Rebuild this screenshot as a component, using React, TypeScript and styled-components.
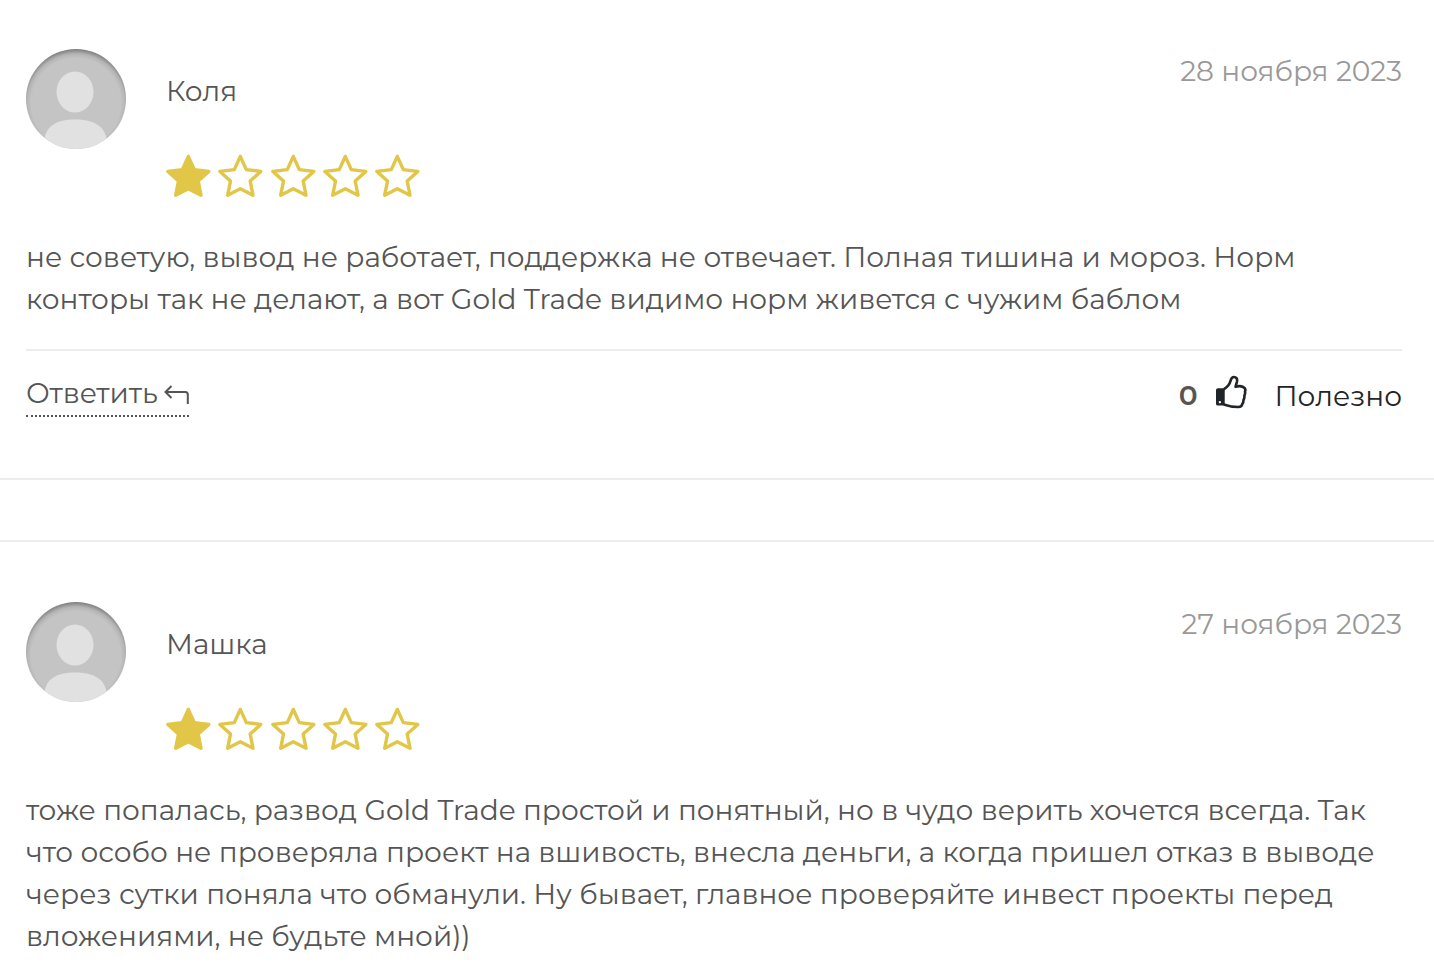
import React from "react";
import styled, { createGlobalStyle } from "styled-components";

const GlobalStyle = createGlobalStyle`
  *, *::before, *::after { box-sizing: border-box; }
  body {
    margin: 0;
    background: #fff;
    color: #555;
    font-family: Montserrat, Inter, sans-serif;
    font-size: 28px;
    font-weight: 400;
    line-height: 42px;
  }
`;

const Feed = styled.main`
  display: flex;
  flex-direction: column;
  gap: 60px;
`;

const Review = styled.article<{ $first?: boolean }>`
  padding: ${(p) => (p.$first ? "49px 32px 61px 26px" : "60px 32px 0 26px")};
  border-top: ${(p) => (p.$first ? "0" : "2px solid #ededed")};
  border-bottom: ${(p) => (p.$first ? "2px solid #ededed" : "0")};
`;

const Header = styled.header`
  display: flex;
  align-items: flex-start;
  gap: 40px;
`;

const AvatarImage = styled.svg`
  display: block;
  flex: none;
  width: 100px;
  height: 100px;
`;

const Author = styled.div`
  flex: 1;
  padding-top: 21px;
`;

const Name = styled.h2`
  margin: 0 0 42px;
  font-size: 28px;
  font-weight: 400;
  line-height: 42px;
`;

const PostDate = styled.time`
  padding-top: 1px;
  color: #999;
`;

const Stars = styled.div`
  display: flex;
  justify-content: space-between;
  width: 254px;
  height: 43px;
`;

const StarIcon = styled.svg`
  display: block;
  width: 45px;
  height: 43px;
`;

const Body = styled.p`
  margin: 39px 0 0;
`;

const Footer = styled.footer`
  display: flex;
  justify-content: space-between;
  align-items: flex-start;
  margin-top: 29px;
  padding-top: 21px;
  border-top: 2px solid #ededed;
`;

const PlainButton = styled.button`
  display: flex;
  align-items: center;
  padding: 0;
  border: 0;
  background: none;
  color: inherit;
  font: inherit;
  cursor: pointer;
`;

const ReplyButton = styled(PlainButton)`
  gap: 6px;
  padding-bottom: 1px;
  border-bottom: 2px dotted #555;
`;

const ReplyIcon = styled.svg`
  width: 25px;
  height: 20px;
  margin-top: 4px;
`;

const Votes = styled.div`
  display: flex;
  align-items: flex-start;
  gap: 18px;
  padding-top: 3px;
`;

const Count = styled.strong`
  font-weight: 600;
  line-height: 40px;
`;

const UsefulButton = styled(PlainButton)`
  gap: 28px;
  color: #212529;
`;

const ThumbIcon = styled.svg`
  width: 31px;
  height: 34px;
  margin-bottom: 8px;
`;

function Avatar({ id }: { id: string }) {
  return (
    <AvatarImage viewBox="0 0 100 100" role="img" aria-label="Аватар">
      <defs>
        <clipPath id={`${id}-clip`}>
          <circle cx="50" cy="50" r="50" />
        </clipPath>
        <radialGradient id={`${id}-shade`} gradientUnits="userSpaceOnUse" cx="50" cy="54" r="54">
          <stop offset="0.83" stopColor="#c4c4c4" />
          <stop offset="0.91" stopColor="#b4b4b4" />
          <stop offset="1" stopColor="#7c7c7c" />
        </radialGradient>
      </defs>
      <g clipPath={`url(#${id}-clip)`}>
        <rect width="100" height="100" fill={`url(#${id}-shade)`} />
        <ellipse cx="49" cy="43" rx="18.5" ry="20.5" fill="#e1e1e1" />
        <path d="M18 92C20 77 30 70.500 49 70.500S79 77 81 92V102H18Z" fill="#e1e1e1" />
      </g>
    </AvatarImage>
  );
}

function Star({ filled }: { filled: boolean }) {
  return (
    <StarIcon viewBox="0 0 45 43" aria-hidden="true">
      <path
        d="M22.300 2.400L28.300 15.600L42.800 17.400L32.200 27.100L35 41.200L22.300 34.700L9.700 41.200L12.500 27.100L1.900 17.400L16.300 15.600Z"
        fill={filled ? "#e1c647" : "none"}
        stroke="#e1c647"
        strokeWidth="3.400"
        strokeLinejoin="round"
      />
    </StarIcon>
  );
}

function Rating({ value }: { value: number }) {
  return (
    <Stars role="img" aria-label={`Оценка: ${value} из 5`}>
      {[1, 2, 3, 4, 5].map((n) => (
        <Star key={n} filled={n <= value} />
      ))}
    </Stars>
  );
}

interface ReviewData {
  id: string;
  name: string;
  date: string;
  isoDate: string;
  rating: number;
  text: string;
  votes?: number;
}

const reviews: ReviewData[] = [
  {
    id: "kolya",
    name: "Коля",
    date: "28 ноября 2023",
    isoDate: "2023-11-28",
    rating: 1,
    text: "не советую, вывод не работает, поддержка не отвечает. Полная тишина и мороз. Норм конторы так не делают, а вот Gold Trade видимо норм живется с чужим баблом",
    votes: 0,
  },
  {
    id: "mashka",
    name: "Машка",
    date: "27 ноября 2023",
    isoDate: "2023-11-27",
    rating: 1,
    text: "тоже попалась, развод Gold Trade простой и понятный, но в чудо верить хочется всегда. Так что особо не проверяла проект на вшивость, внесла деньги, а когда пришел отказ в выводе через сутки поняла что обманули. Ну бывает, главное проверяйте инвест проекты перед вложениями, не будьте мной))",
  },
];

function Actions({ votes }: { votes: number }) {
  return (
    <Footer>
      <ReplyButton type="button">
        Ответить
        <ReplyIcon viewBox="0 0 25 20" fill="none" stroke="currentColor" strokeWidth="2" aria-hidden="true">
          <path d="M7.500 1L1.500 7L7.500 13M1.500 7H21.500Q23.800 7 23.800 9.500V19" />
        </ReplyIcon>
      </ReplyButton>
      <Votes>
        <Count>{votes}</Count>
        <UsefulButton type="button">
          <ThumbIcon viewBox="0 0 32 34" fill="none" aria-hidden="true">
            <path d="M2 13H9V31H2Q0 31 0 29V15Q0 13 2 13Z" fill="#212529" />
            <path
              d="M8 14.200C11.500 12 14 9.500 15 5.500C15.700 2.500 16.500 1.500 18.500 1.500C21 1.500 22.300 3.500 21.600 6.500L20.200 11.500C23 10.800 26 10.800 28 11.800C30 12.800 30.800 14.500 29.900 16.300C30.300 18 30 19.500 29.300 20.800C29.500 22.300 29.100 24 28.400 25.200C28.400 27 27.900 28.500 27.100 29.500C26.800 31.600 25.300 32.500 23 32.500C18 32.500 13 31.500 8 29.800"
              stroke="#212529"
              strokeWidth="2.700"
              strokeLinejoin="round"
            />
            <circle cx="4" cy="27.500" r="1.200" fill="#fff" />
          </ThumbIcon>
          Полезно
        </UsefulButton>
      </Votes>
    </Footer>
  );
}

export default function App() {
  return (
    <>
      <GlobalStyle />
      <Feed>
        {reviews.map((r, i) => (
          <Review key={r.id} $first={i === 0}>
            <Header>
              <Avatar id={r.id} />
              <Author>
                <Name>{r.name}</Name>
                <Rating value={r.rating} />
              </Author>
              <PostDate dateTime={r.isoDate}>{r.date}</PostDate>
            </Header>
            <Body>{r.text}</Body>
            {r.votes !== undefined && <Actions votes={r.votes} />}
          </Review>
        ))}
      </Feed>
    </>
  );
}
